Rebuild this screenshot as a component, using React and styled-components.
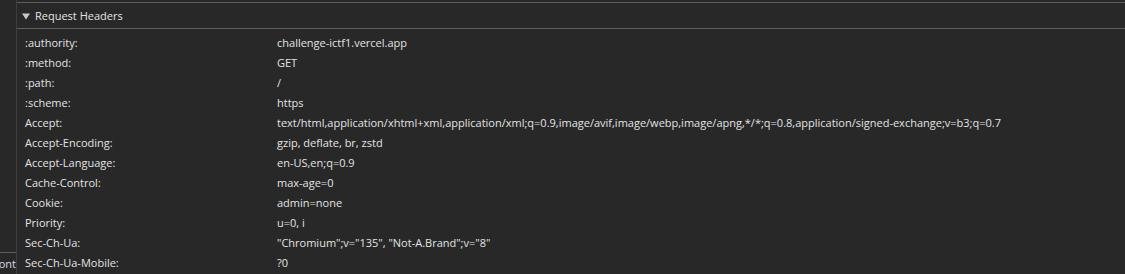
import React from "react";
import styled, { createGlobalStyle } from "styled-components";

const GlobalStyle = createGlobalStyle`
  html, body {
    margin: 0;
    padding: 0;
    background: #282828;
    overflow: hidden;
  }
  body {
    font-family: "Open Sans", "Liberation Sans", sans-serif;
    font-size: 11px;
    color: #e3e3e3;
  }
`;

const Page = styled.div`
  display: flex;
  width: 1125px;
  height: 274px;
  background: #282828;
  overflow: hidden;
`;

const SideStrip = styled.div`
  width: 16px;
  flex-shrink: 0;
  border-right: 1px solid #3d3d3d;
  display: flex;
  flex-direction: column;
  justify-content: flex-end;
  overflow: hidden;
`;

const SideTab = styled.div`
  height: 20px;
  border-top: 1px solid #5e5e5e;
  display: flex;
  align-items: center;
  justify-content: flex-end;
  white-space: nowrap;
  color: #d6dcf0;
  margin-bottom: 1px;
`;

const Main = styled.div`
  flex: 1;
  padding-top: 2px;
  display: flex;
  flex-direction: column;
`;

const SectionHeader = styled.div`
  height: 25px;
  border-top: 1px solid #5e5e5e;
  border-bottom: 1px solid #5e5e5e;
  display: flex;
  align-items: center;
  padding-left: 5px;
  gap: 5px;
  color: #e3e3e3;
`;

const Caret = styled.svg`
  width: 8px;
  height: 8px;
  fill: #c7c7c7;
`;

const List = styled.div`
  padding-top: 3px;
`;

const Row = styled.div`
  display: grid;
  grid-template-columns: 252px 1fr;
  height: 20px;
  align-items: center;
  padding-left: 8px;
  white-space: nowrap;
`;

const Key = styled.span`
  color: #e3e3e3;
`;

const Value = styled.span`
  color: #e3e3e3;
`;

const headers = [
  [":authority:", "challenge-ictf1.vercel.app"],
  [":method:", "GET"],
  [":path:", "/"],
  [":scheme:", "https"],
  [
    "Accept:",
    "text/html,application/xhtml+xml,application/xml;q=0.9,image/avif,image/webp,image/apng,*/*;q=0.8,application/signed-exchange;v=b3;q=0.7",
  ],
  ["Accept-Encoding:", "gzip, deflate, br, zstd"],
  ["Accept-Language:", "en-US,en;q=0.9"],
  ["Cache-Control:", "max-age=0"],
  ["Cookie:", "admin=none"],
  ["Priority:", "u=0, i"],
  ["Sec-Ch-Ua:", '"Chromium";v="135", "Not-A.Brand";v="8"'],
  ["Sec-Ch-Ua-Mobile:", "?0"],
];

export default function App() {
  return (
    <>
      <GlobalStyle />
      <Page>
        <SideStrip>
          <SideTab>Cont</SideTab>
        </SideStrip>
        <Main>
          <SectionHeader>
            <Caret viewBox="0 0 8 8">
              <path d="M0 1.5 L8 1.5 L4 7.5 Z" />
            </Caret>
            Request Headers
          </SectionHeader>
          <List>
            {headers.map(([k, v]) => (
              <Row key={k}>
                <Key>{k}</Key>
                <Value>{v}</Value>
              </Row>
            ))}
          </List>
        </Main>
      </Page>
    </>
  );
}
